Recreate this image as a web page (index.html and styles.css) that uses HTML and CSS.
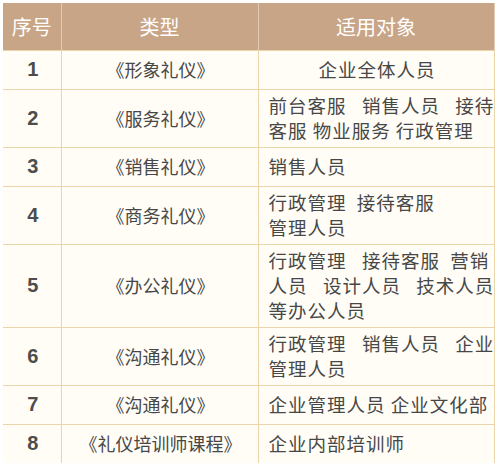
FILE: index.html
```html
<!DOCTYPE html>
<html lang="zh-CN">
<head>
<meta charset="utf-8">
<link rel="stylesheet" href="styles.css">
</head>
<body>
<div class="wrap">
<table class="tbl">
<colgroup><col class="c1"><col class="c2"><col class="c3"></colgroup>
<thead>
<tr><th>序号</th><th>类型</th><th>适用对象</th></tr>
</thead>
<tbody>
<tr><td class="num">1</td><td class="type">《形象礼仪》</td><td class="who center">企业全体人员</td></tr>
<tr><td class="num">2</td><td class="type">《服务礼仪》</td><td class="who">前台客服&nbsp;&nbsp; 销售人员&nbsp;&nbsp; 接待<br>客服 物业服务 行政管理</td></tr>
<tr><td class="num">3</td><td class="type">《销售礼仪》</td><td class="who">销售人员</td></tr>
<tr><td class="num">4</td><td class="type">《商务礼仪》</td><td class="who">行政管理&nbsp; 接待客服<br>管理人员</td></tr>
<tr><td class="num">5</td><td class="type">《办公礼仪》</td><td class="who">行政管理&nbsp;&nbsp; 接待客服&nbsp; 营销<br>人员&nbsp;&nbsp; 设计人员&nbsp;&nbsp; 技术人员<br>等办公人员</td></tr>
<tr><td class="num">6</td><td class="type">《沟通礼仪》</td><td class="who">行政管理&nbsp;&nbsp; 销售人员&nbsp;&nbsp; 企业<br>管理人员</td></tr>
<tr><td class="num">7</td><td class="type">《沟通礼仪》</td><td class="who">企业管理人员 企业文化部</td></tr>
<tr><td class="num">8</td><td class="type">《礼仪培训师课程》</td><td class="who">企业内部培训师</td></tr>
</tbody>
</table>
</div>
</body>
</html>
```

FILE: styles.css
```css
html, body {
  margin: 0;
  padding: 0;
  background: #ffffff;
}

.wrap {
  padding: 3px 0 0 3px;
}

.tbl {
  width: 491px;
  table-layout: fixed;
  border-collapse: collapse;
  font-family: "Noto Sans CJK SC", "Noto Sans", sans-serif;
  color: #474747;
}

.c1 { width: 58px; }
.c2 { width: 197px; }
.c3 { width: 236px; }

.tbl th {
  height: 47px;
  padding: 0;
  background: #c9a587;
  color: #ffffff;
  font-size: 20px;
  font-weight: normal;
  text-align: center;
  border-left: 1px solid #e2ccb6;
  border-right: 1px solid #e2ccb6;
}

.tbl th:first-child {
  border-left: none;
}

.tbl td {
  height: 31px;
  padding: 3px 8px 4px 10px;
  background: #fffdf6;
  border: 1px solid #ebd6ab;
  font-size: 18.5px;
  line-height: 25px;
  vertical-align: middle;
}

.tbl td:first-child {
  border-left: none;
}

.tbl tbody tr:last-child td {
  border-bottom: none;
}

.num {
  text-align: center;
  font-family: "Liberation Sans", Arial, sans-serif;
  font-weight: bold;
  font-size: 20px !important;
  color: #4d4d4d;
}

.type {
  text-align: center;
  font-size: 18px !important;
}

.who {
  text-align: left;
  letter-spacing: 1px;
  white-space: nowrap;
}

.who.center {
  text-align: center;
}
```
